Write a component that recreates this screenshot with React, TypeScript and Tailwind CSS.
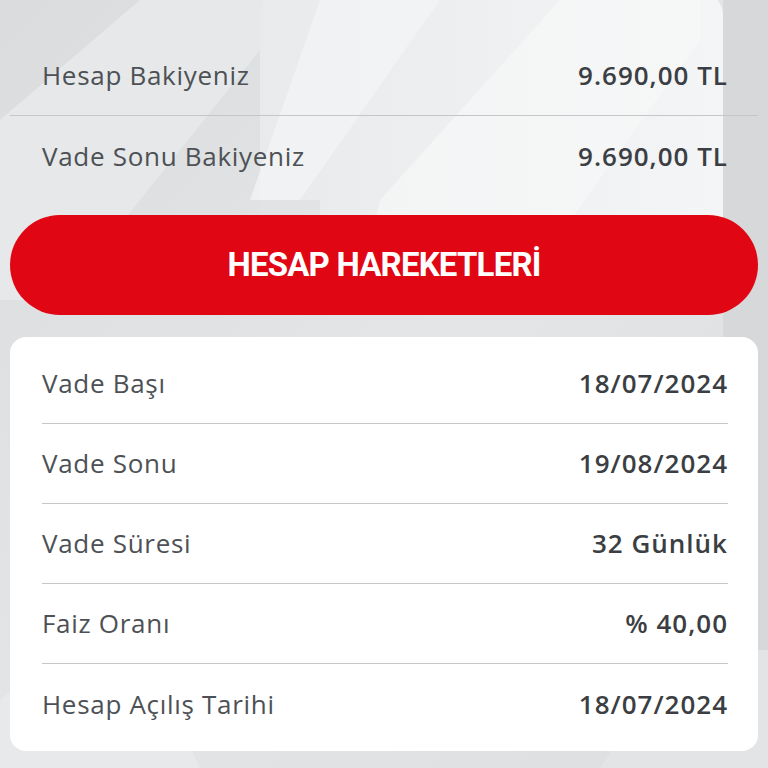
import React from "react";

const topRows = [
  { label: "Hesap Bakiyeniz", value: "9.690,00 TL" },
  { label: "Vade Sonu Bakiyeniz", value: "9.690,00 TL" },
];

const cardRows = [
  { label: "Vade Başı", value: "18/07/2024" },
  { label: "Vade Sonu", value: "19/08/2024" },
  { label: "Vade Süresi", value: "32 Günlük" },
  { label: "Faiz Oranı", value: "% 40,00" },
  { label: "Hesap Açılış Tarihi", value: "18/07/2024" },
];

function Background() {
  return (
    <svg className="absolute inset-0" width="768" height="768" viewBox="0 0 768 768">
      <defs>
        <linearGradient id="bg" x1="0" y1="0" x2="1" y2="1">
          <stop offset="0" stopColor="#dadcde" />
          <stop offset="0.5" stopColor="#e3e5e7" />
          <stop offset="1" stopColor="#dcdee0" />
        </linearGradient>
        <linearGradient id="card" x1="0" y1="0" x2="1" y2="0">
          <stop offset="0" stopColor="#e9eaeb" />
          <stop offset="1" stopColor="#f4f5f6" />
        </linearGradient>
      </defs>
      <rect width="768" height="768" fill="url(#bg)" />
      <polygon points="0,120 140,0 300,0 60,300 0,300" fill="#e6e8e9" />
      <rect x="723" y="0" width="45" height="768" fill="#d6d8da" />
      <rect x="260" y="-10" width="463" height="300" rx="26" fill="url(#card)" />
      <polygon points="320,0 440,0 300,200 250,200" fill="#f3f4f5" opacity="0.8" />
      <polygon points="380,200 560,0 700,0 700,40 520,290 360,290" fill="#f7f8f8" opacity="0.7" />
      <rect x="260" y="200" width="60" height="100" fill="#d9dbdd" opacity="0.5" />
      <polygon points="600,768 680,650 768,650 768,768" fill="#e2e4e6" />
      <polygon points="0,700 120,600 200,768 0,768" fill="#e8e9ea" />
    </svg>
  );
}

function Row({ label, value }: { label: string; value: string }) {
  return (
    <>
      <span className="text-[26px] font-normal text-[#4d5155] tracking-[0.7px]">{label}</span>
      <span className="text-[26px] font-semibold text-[#3b3f43] tracking-[1px]">{value}</span>
    </>
  );
}

export default function App() {
  const font = { fontFamily: "'Open Sans', sans-serif" };
  return (
    <div className="relative w-[768px] h-[768px] overflow-hidden bg-[#dfe1e3]" style={font}>
      <Background />
      <div className="relative flex flex-col pt-[36px] px-[10px]">
        <div className="flex flex-col">
          {topRows.map((r, i) => (
            <div
              key={r.label}
              className={`flex items-center justify-between h-[80px] pl-[32px] pr-[30px] ${i === 0 ? "border-b border-[#c4c6c8]" : ""}`}
            >
              <Row label={r.label} value={r.value} />
            </div>
          ))}
        </div>
        <button className="mt-[19px] h-[100px] w-full rounded-full bg-[#e10613] flex items-center justify-center">
          <span
            className="text-[33px] font-bold text-white tracking-[-0.8px]"
            style={{ fontFamily: "Roboto, sans-serif" }}
          >
            HESAP HAREKETLERİ
          </span>
        </button>
        <div className="mt-[22px] bg-white rounded-[16px] py-[7px] pl-[32px] pr-[30px] flex flex-col">
          {cardRows.map((r, i) => (
            <div
              key={r.label}
              className={`flex items-center justify-between h-[80px] ${i < cardRows.length - 1 ? "border-b border-[#c4c6c8]" : ""}`}
            >
              <Row label={r.label} value={r.value} />
            </div>
          ))}
        </div>
      </div>
    </div>
  );
}
